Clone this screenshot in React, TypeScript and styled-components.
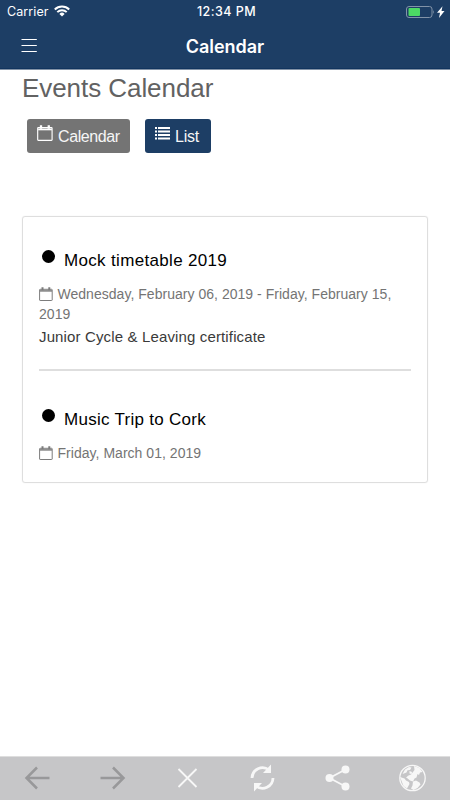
import React from 'react';
import styled, { createGlobalStyle } from 'styled-components';

const GlobalStyle = createGlobalStyle`
  * { box-sizing: border-box; }
  body { margin: 0; background: #fff; }
  svg { display: block; flex: none; }
`;

const Screen = styled.div`
  width: 450px;
  height: 800px;
  display: flex;
  flex-direction: column;
  overflow: hidden;
  background: #fff;
  font-family: 'Liberation Sans', Arial, sans-serif;
`;

const Header = styled.header`
  height: 70px;
  flex: none;
  background: #1d3e65;
  border-bottom: 1px solid #8393a7;
  box-shadow: inset 0 -1px 0 #11345e;
  color: #fff;
  font-family: Inter, sans-serif;
`;

const BarGrid = styled.div`
  display: grid;
  grid-template-columns: 1fr auto 1fr;
  align-items: center;
`;

const StatusBar = styled(BarGrid)`
  height: 23px;
  padding: 0 5px 0 7px;
  font-size: 12.5px;
`;

const NavBar = styled(BarGrid)`
  height: 46px;
  padding: 0 21px;
`;

const Carrier = styled.div`
  display: flex;
  align-items: center;
  gap: 5px;
  letter-spacing: 0.1px;

  svg { margin-top: -1px; }
`;

const Clock = styled.div`
  font-weight: 500;
  letter-spacing: 0.45px;
  padding-left: 1px;
`;

const Battery = styled.div`
  display: flex;
  justify-content: flex-end;
`;

const NavTitle = styled.h1`
  margin: 0;
  font-size: 18px;
  font-weight: 600;
  letter-spacing: -0.05px;
`;

const Content = styled.main`
  flex: 1;
  padding: 0 22px;
`;

const PageTitle = styled.h2`
  margin: 0;
  padding-top: 3px;
  font-size: 26px;
  line-height: 30px;
  font-weight: 400;
  letter-spacing: -0.06px;
  color: #626262;
`;

const ViewSwitch = styled.div`
  display: flex;
  gap: 15px;
  margin: 16px 0 0 5px;
`;

const ViewButton = styled.button<{ $width: number; $color: string; $spacing: number }>`
  display: flex;
  align-items: flex-start;
  gap: 5px;
  width: ${(p) => p.$width}px;
  height: 34px;
  padding: 8px 0 0 10px;
  border: 0;
  border-radius: 3px;
  background: ${(p) => p.$color};
  color: #f6f6f6;
  font: 16px/20px 'Liberation Sans', Arial, sans-serif;
  letter-spacing: ${(p) => p.$spacing}px;
`;

const Card = styled.section`
  height: 267px;
  margin-top: 63px;
  padding: 0 16px;
  border: 1px solid #dedede;
  border-radius: 3px;
  box-shadow: 0 0 1px #ddd;
`;

const Event = styled.article`
  height: 159px;
  padding-top: 32px;

  &:first-child {
    height: 154px;
    border-bottom: 2px solid #dedede;
  }
  &:last-child {
    padding-top: 37px;
  }
`;

const EventTitle = styled.h3<{ $spacing: number }>`
  display: flex;
  gap: 9px;
  margin: 0;
  padding-left: 3px;
  height: 24px;
  font-size: 17px;
  line-height: 24px;
  font-weight: 400;
  color: #000;
  letter-spacing: ${(p) => p.$spacing}px;
`;

const Dot = styled.span`
  width: 13px;
  height: 13px;
  margin-top: 0.5px;
  border-radius: 50%;
  background: #000;
`;

const EventDate = styled.p`
  margin: 12px 0 0;
  font-size: 14px;
  line-height: 19.5px;
  color: #747474;
  white-space: nowrap;
  letter-spacing: 0.03px;

  svg { display: inline-block; vertical-align: -2px; margin-right: 4.5px; }
`;

const Description = styled.p`
  margin: 3px 0 0;
  font-size: 15px;
  line-height: 20px;
  color: #3a3a3a;
  letter-spacing: 0.14px;
`;

const Toolbar = styled.nav`
  height: 44px;
  flex: none;
  display: grid;
  grid-template-columns: repeat(6, 75px);
  place-items: center;
  padding-bottom: 2px;
  background: #c6c6c8;
  border-top: 1px solid #dedede;
`;

const CalendarIcon = ({ size = 14, stroke = '#7c7c7c' }: { size?: number; stroke?: string }) => (
  <svg width={size} height={size} viewBox="0 0 14 14" fill="none" stroke={stroke}>
    <rect x=".6" y="2.3" width="12.600" height="11.200" rx=".5" />
    <path d="M1 3.900h12" strokeWidth="1.500" />
    <path d="M3.500.3v3M10.300.3v3" strokeWidth="2" />
  </svg>
);

const ButtonCalendar = styled.span`
  margin-top: -2px;
`;

const ListIcon = () => (
  <svg width="15" height="13" viewBox="0 0 15 13" fill="#fff">
    {[0, 3.5, 7, 10.5].map((y) => (
      <g key={y}>
        <rect y={y} width="2" height="2" />
        <rect x="3" y={y} width="12" height="2" />
      </g>
    ))}
  </svg>
);

const WifiIcon = () => (
  <svg width="16" height="12" viewBox="0 0 16 12" fill="none" stroke="#fff" strokeWidth="2">
    <path d="M.8 4.500a10.200 10.200 0 0 1 14.400 0M3.300 7.100a6.700 6.700 0 0 1 9.400 0" />
    <path d="M8 11.600 5.400 8.900a3.600 3.600 0 0 1 5.200 0z" fill="#fff" stroke="none" />
  </svg>
);

const BatteryIcon = () => (
  <svg width="40" height="14" viewBox="0 0 40 14">
    <rect x="1.500" y="1.500" width="25.500" height="11" rx="2.500" fill="none" stroke="#8293a8" />
    <path d="M28.200 5q1.800 2 0 4z" fill="#8293a8" />
    <rect x="3.500" y="3" width="11.500" height="8" rx="1" fill="#4cd964" />
    <path d="m37.500 1.200-5.500 6.600h3L34 13l5.500-6.900h-3z" fill="#fff" />
  </svg>
);

const MenuIcon = () => (
  <svg width="16" height="16" viewBox="0 0 16 16" stroke="#fff" strokeWidth="1.100">
    <path d="M.5 1.500h15.300M.5 7.500h15.300M.5 13.500h15.300" />
  </svg>
);

const ToolIcon = styled.svg.attrs({ width: 28, height: 28, viewBox: '0.5 0 28 28' })<{ $muted?: boolean }>`
  color: ${(p) => (p.$muted ? '#98989a' : '#f7f7f7')};
  fill: none;
  stroke: currentColor;
`;

export default function App() {
  return (
    <Screen>
      <GlobalStyle />
      <Header>
        <StatusBar>
          <Carrier>Carrier <WifiIcon /></Carrier>
          <Clock>12:34 PM</Clock>
          <Battery><BatteryIcon /></Battery>
        </StatusBar>
        <NavBar>
          <MenuIcon />
          <NavTitle>Calendar</NavTitle>
        </NavBar>
      </Header>
      <Content>
        <PageTitle>Events Calendar</PageTitle>
        <ViewSwitch>
          <ViewButton $width={103} $color="#747474" $spacing={-0.4}>
            <ButtonCalendar><CalendarIcon size={16} stroke="#fff" /></ButtonCalendar>Calendar
          </ViewButton>
          <ViewButton $width={66} $color="#1d3e65" $spacing={-0.25}>
            <ListIcon /> List
          </ViewButton>
        </ViewSwitch>
        <Card>
          <Event>
            <EventTitle $spacing={0.33}><Dot />Mock timetable 2019</EventTitle>
            <EventDate>
              <CalendarIcon />Wednesday, February 06, 2019 - Friday, February 15,<br />2019
            </EventDate>
            <Description>Junior Cycle &amp; Leaving certificate</Description>
          </Event>
          <Event>
            <EventTitle $spacing={0.28}><Dot />Music Trip to Cork</EventTitle>
            <EventDate><CalendarIcon />Friday, March 01, 2019</EventDate>
          </Event>
        </Card>
      </Content>
      <Toolbar>
        <ToolIcon $muted strokeWidth="2.500"><path d="M26 14H3M13.500 3.500 3 14l10.500 10.500" /></ToolIcon>
        <ToolIcon $muted strokeWidth="2.500"><path d="M2 14h23M14.500 3.500 25 14 14.500 24.500" /></ToolIcon>
        <ToolIcon strokeWidth="1.800"><path d="m5 5 18 18M23 5 5 23" /></ToolIcon>
        <ToolIcon strokeWidth="2.800">
          <path d="M3.500 14A10.500 10.500 0 0 1 20.500 6M24.500 14A10.500 10.500 0 0 1 7.500 22" />
          <path d="M22.500 .5v8.500h-8zM5.500 27.500v-8.500h8z" fill="currentColor" stroke="none" />
        </ToolIcon>
        <ToolIcon strokeWidth="1.800">
          <path d="M22 5.500 6 14l16 8.500" />
          <g fill="currentColor" stroke="none"><circle cx="22" cy="5.500" r="4" /><circle cx="6" cy="14" r="4" /><circle cx="22" cy="22.500" r="4" /></g>
        </ToolIcon>
        <ToolIcon strokeWidth="1.300">
          <circle cx="14" cy="14" r="12.700" />
          <g fill="currentColor" stroke="none">
            <path d="m6.500 5.500 4-2.500 2.500.5-1.500 2.500-2.500.3-1 2.200L4 10z" />
            <path d="m11 7 2.500 1-.5 2-2-.5zM15.500 2l5.500 2 3 4-2.500.5-1 2.500-1.500-1-1 3.500-2 1-1.500 3-3-1-3-2.500-1-.3 2-2 3-1.200 2-2.500 1.500-2z" />
            <path d="m1.500 13 4.500 1.500 1.500 2 3 1.500.5 2-2.500 4.500-3.500-2.500z" />
            <path d="m14.500 17.500 3-1 3.500 2 1 2-3 3.500-4 2-2.500-1.500 1.500-3z" />
          </g>
        </ToolIcon>
      </Toolbar>
    </Screen>
  );
}
